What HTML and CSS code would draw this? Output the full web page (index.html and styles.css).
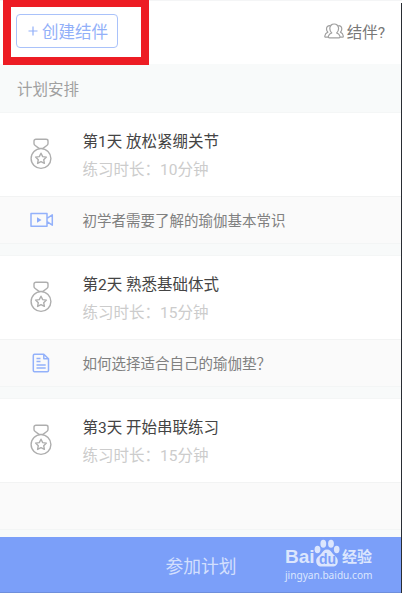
FILE: index.html
```html
<!DOCTYPE html>
<html lang="zh-CN">
<head>
    <meta charset="UTF-8">
    <meta name="viewport" content="width=device-width, initial-scale=1.0">
    <title>计划安排</title>
    <link rel="stylesheet" href="styles.css">
</head>
<body>
    <svg class="symbols" width="0" height="0">
        <symbol id="medal" viewBox="0 0 24 32">
            <path d="M7 1.200h10c1.400 0 2 .7 2 1.700v2.600c0 1-.4 1.500-1.200 2L14 10.400h-4L6.200 7.500C5.400 7 5 6.500 5 5.500V2.900c0-1 .6-1.700 2-1.700z"/>
            <circle cx="12" cy="20.500" r="9.900"/>
            <path d="M12 15.200l1.700 3.400 3.700.5-2.700 2.600.7 3.700-3.400-1.700-3.400 1.700.7-3.700-2.700-2.600 3.700-.5z"/>
        </symbol>
    </svg>

    <header>
        <div class="highlight"></div>
        <button class="create">
            <svg class="plus" viewBox="0 0 10 10"><path d="M5 .5v9M.5 5h9"/></svg>
            创建结伴
        </button>
        <div class="partner">
            <svg class="people" viewBox="0 0 20 16">
                <path d="M5.500 14.800h9.400c1 0 1.300-.6 1-1.600-.5-1.700-1.500-2.700-3.300-3.300 1.400-1 2-2.400 2-4.300C14.600 2.900 12.700 1 10.200 1S5.800 2.900 5.800 5.600c0 1.900.7 3.300 2 4.300-1.800.6-2.900 1.600-3.400 3.300-.3 1 .1 1.600 1.100 1.600z"/>
                <path d="M6 2.600C3.800 2.500 2.500 4 2.500 5.900c0 1.400.5 2.400 1.400 3.200C2.200 9.800 1.100 11 .8 13c-.1.800.2 1.200.9 1.200h2.500M14.300 2.600c2.200-.1 3.500 1.400 3.500 3.300 0 1.400-.5 2.400-1.400 3.200 1.700.7 2.600 1.900 2.900 3.900.1.800-.2 1.200-.9 1.200h-2.300"/>
            </svg>
            <span>结伴?</span>
        </div>
    </header>

    <h2>计划安排</h2>

    <section>
        <div class="day">
            <svg class="medal"><use href="#medal"/></svg>
            <div>
                <h3>第1天 放松紧绷关节</h3>
                <p>练习时长：10分钟</p>
            </div>
        </div>
        <div class="extra">
            <svg class="video" viewBox="0 0 24 16">
                <path d="M1 1.500h16v12.800H1zM17 6.400l5.300-3.600v10.400L17 9.600"/>
                <path class="solid" d="M7 5.200v5.600l4.500-2.800z"/>
            </svg>
            <p>初学者需要了解的瑜伽基本常识</p>
        </div>
    </section>

    <section>
        <div class="day">
            <svg class="medal"><use href="#medal"/></svg>
            <div>
                <h3>第2天 熟悉基础体式</h3>
                <p>练习时长：15分钟</p>
            </div>
        </div>
        <div class="extra">
            <svg class="doc" viewBox="0 0 18 20">
                <path d="M2.500 1.200h9.300l4.700 4.600v11.700c0 .8-.4 1.200-1.200 1.200H2.500c-.8 0-1.200-.4-1.200-1.200V2.400c0-.8.4-1.200 1.200-1.200zM11.800 1.200v4.600h4.700M4.500 5.500h4M4.500 8.500h4M4.500 12h9.200M4.500 15h9.200"/>
            </svg>
            <p>如何选择适合自己的瑜伽垫？</p>
        </div>
    </section>

    <section>
        <div class="day">
            <svg class="medal"><use href="#medal"/></svg>
            <div>
                <h3>第3天 开始串联练习</h3>
                <p>练习时长：15分钟</p>
            </div>
        </div>
        <div class="extra"></div>
    </section>

    <footer>
        <span>参加计划</span>
        <div class="watermark">
            <div class="brand">
                <span class="bai">Bai</span>
                <span class="paw">
                    <svg viewBox="0 0 26 28">
                        <ellipse cx="3.500" cy="10.500" rx="2.900" ry="3.700"/>
                        <ellipse cx="9.300" cy="4.800" rx="2.900" ry="4"/>
                        <ellipse cx="17" cy="4.800" rx="2.900" ry="4"/>
                        <ellipse cx="22.700" cy="10.500" rx="2.800" ry="3.700"/>
                        <path d="M13 10.500c3 0 4 2 6 4.500 2 2 4.800 3.500 4.800 7 0 3.500-2 5.500-5.300 5.500H7.500c-3.300 0-5.300-2-5.300-5.500 0-3.500 2.800-5 4.800-7 2-2.500 3-4.500 6-4.500z"/>
                    </svg>
                    <b>du</b>
                </span>
                <span class="jy">经验</span>
            </div>
            <div class="url">jingyan.baidu.com</div>
        </div>
    </footer>
    <div class="edge"></div>
</body>
</html>
```

FILE: styles.css
```css
* {
    box-sizing: border-box;
}
body {
    margin: 0;
    height: 593px;
    display: flex;
    flex-direction: column;
    position: relative;
    overflow: hidden;
    background-color: #f8fafa;
    font-family: Roboto, "Noto Sans CJK SC", sans-serif;
    font-size: 15.5px;
    color: #777777;
}
h2, h3, p {
    margin: 0;
    font-weight: 400;
}
svg {
    display: block;
    fill: none;
    stroke-linejoin: round;
}
.symbols {
    position: absolute;
}
header {
    height: 64px;
    flex: none;
    display: flex;
    align-items: center;
    justify-content: space-between;
    padding: 0 17px 3px 16px;
    background-color: #ffffff;
    border-top: 1px solid #f4f5f6;
    position: relative;
}
/* red frame around the create button */
.highlight {
    position: absolute;
    left: 3px;
    top: -1px;
    width: 146px;
    height: 65px;
    border: 8px solid #ed1c24;
    border-top-width: 7px;
}
.create {
    width: 102px;
    height: 34px;
    padding: 0 0 0 2px;
    display: flex;
    align-items: center;
    justify-content: center;
    gap: 4px;
    border: 1px solid #a9c2fa;
    border-radius: 4px;
    background-color: #ffffff;
    font: inherit;
    font-size: 16.5px;
    color: #92b0f9;
}
.plus {
    width: 10px;
    height: 10px;
    stroke: #92b0f9;
    stroke-width: 1.200px;
}
.partner {
    display: flex;
    align-items: center;
    gap: 3px;
    color: #777777;
}
.people {
    width: 20px;
    height: 16px;
    stroke: #a0a0a0;
    stroke-width: 1.200px;
}
h2 {
    height: 48px;
    flex: none;
    padding-left: 17px;
    line-height: 52px;
    font-size: 15.5px;
    color: #a0a0a0;
}
section {
    flex: none;
    height: 131.500px;
    margin-bottom: 11.700px;
    border-top: 1px solid #f4f6f6;
    border-bottom: 1px solid #f3f5f5;
}
.day {
    height: 83px;
    display: flex;
    align-items: center;
    padding-left: 29px;
    background-color: #ffffff;
}
.medal {
    width: 24px;
    height: 32px;
    margin: 0 29.500px 2px 0;
    stroke: #aeaeae;
    stroke-width: 1.400px;
}
.day > div {
    padding-top: 2px;
}
.day h3 {
    font-size: 15.5px;
    line-height: 28px;
    color: #444444;
}
.day p {
    line-height: 28px;
    color: #cccccc;
}
.extra {
    height: 47px;
    display: flex;
    align-items: center;
    padding: 0 0 1px 29px;
    background-color: #fafafa;
    border-top: 1px solid #f2f3f3;
    font-size: 14.5px;
    color: #808080;
}
.video, .doc {
    stroke: #93b1fa;
    stroke-width: 1.500px;
}
.video {
    width: 24px;
    height: 16px;
    margin: 1px 28.500px 0 1px;
}
.solid {
    fill: #8cacfa;
    stroke: none;
}
.doc {
    width: 18px;
    height: 20px;
    margin: 0 32.500px 0 3px;
}
footer {
    position: absolute;
    left: 0;
    right: 0;
    bottom: 0;
    height: 56px;
    display: flex;
    align-items: center;
    justify-content: center;
    background-color: #7b9ff9;
    border-bottom: 1px solid #6f8fdc;
    font-size: 17.800px;
    color: #d3dffd;
}
.watermark {
    position: absolute;
    left: 285px;
    top: 2px;
    color: #dce6fd;
}
.brand {
    height: 28px;
    display: flex;
    align-items: flex-end;
    font-family: "Liberation Sans", "Noto Sans CJK SC", sans-serif;
    font-weight: 700;
    line-height: 20px;
}
.bai {
    width: 29px;
    font-size: 19px;
}
.paw {
    position: relative;
    width: 26px;
}
.paw svg {
    width: 26px;
    height: 28px;
    fill: #dce6fd;
}
.paw b {
    position: absolute;
    left: 5px;
    bottom: 1px;
    font-size: 14px;
    font-weight: 700;
    line-height: 14px;
    color: #7b9ff9;
}
.jy {
    margin-left: 2px;
    font-size: 15px;
}
.url {
    font-family: "Noto Sans", sans-serif;
    font-size: 10.100px;
    line-height: 16px;
}
/* dark strip along the right side of the screen */
.edge {
    position: absolute;
    top: 3px;
    right: 0;
    bottom: 0;
    width: 1px;
    background-color: #292d33;
}
```
